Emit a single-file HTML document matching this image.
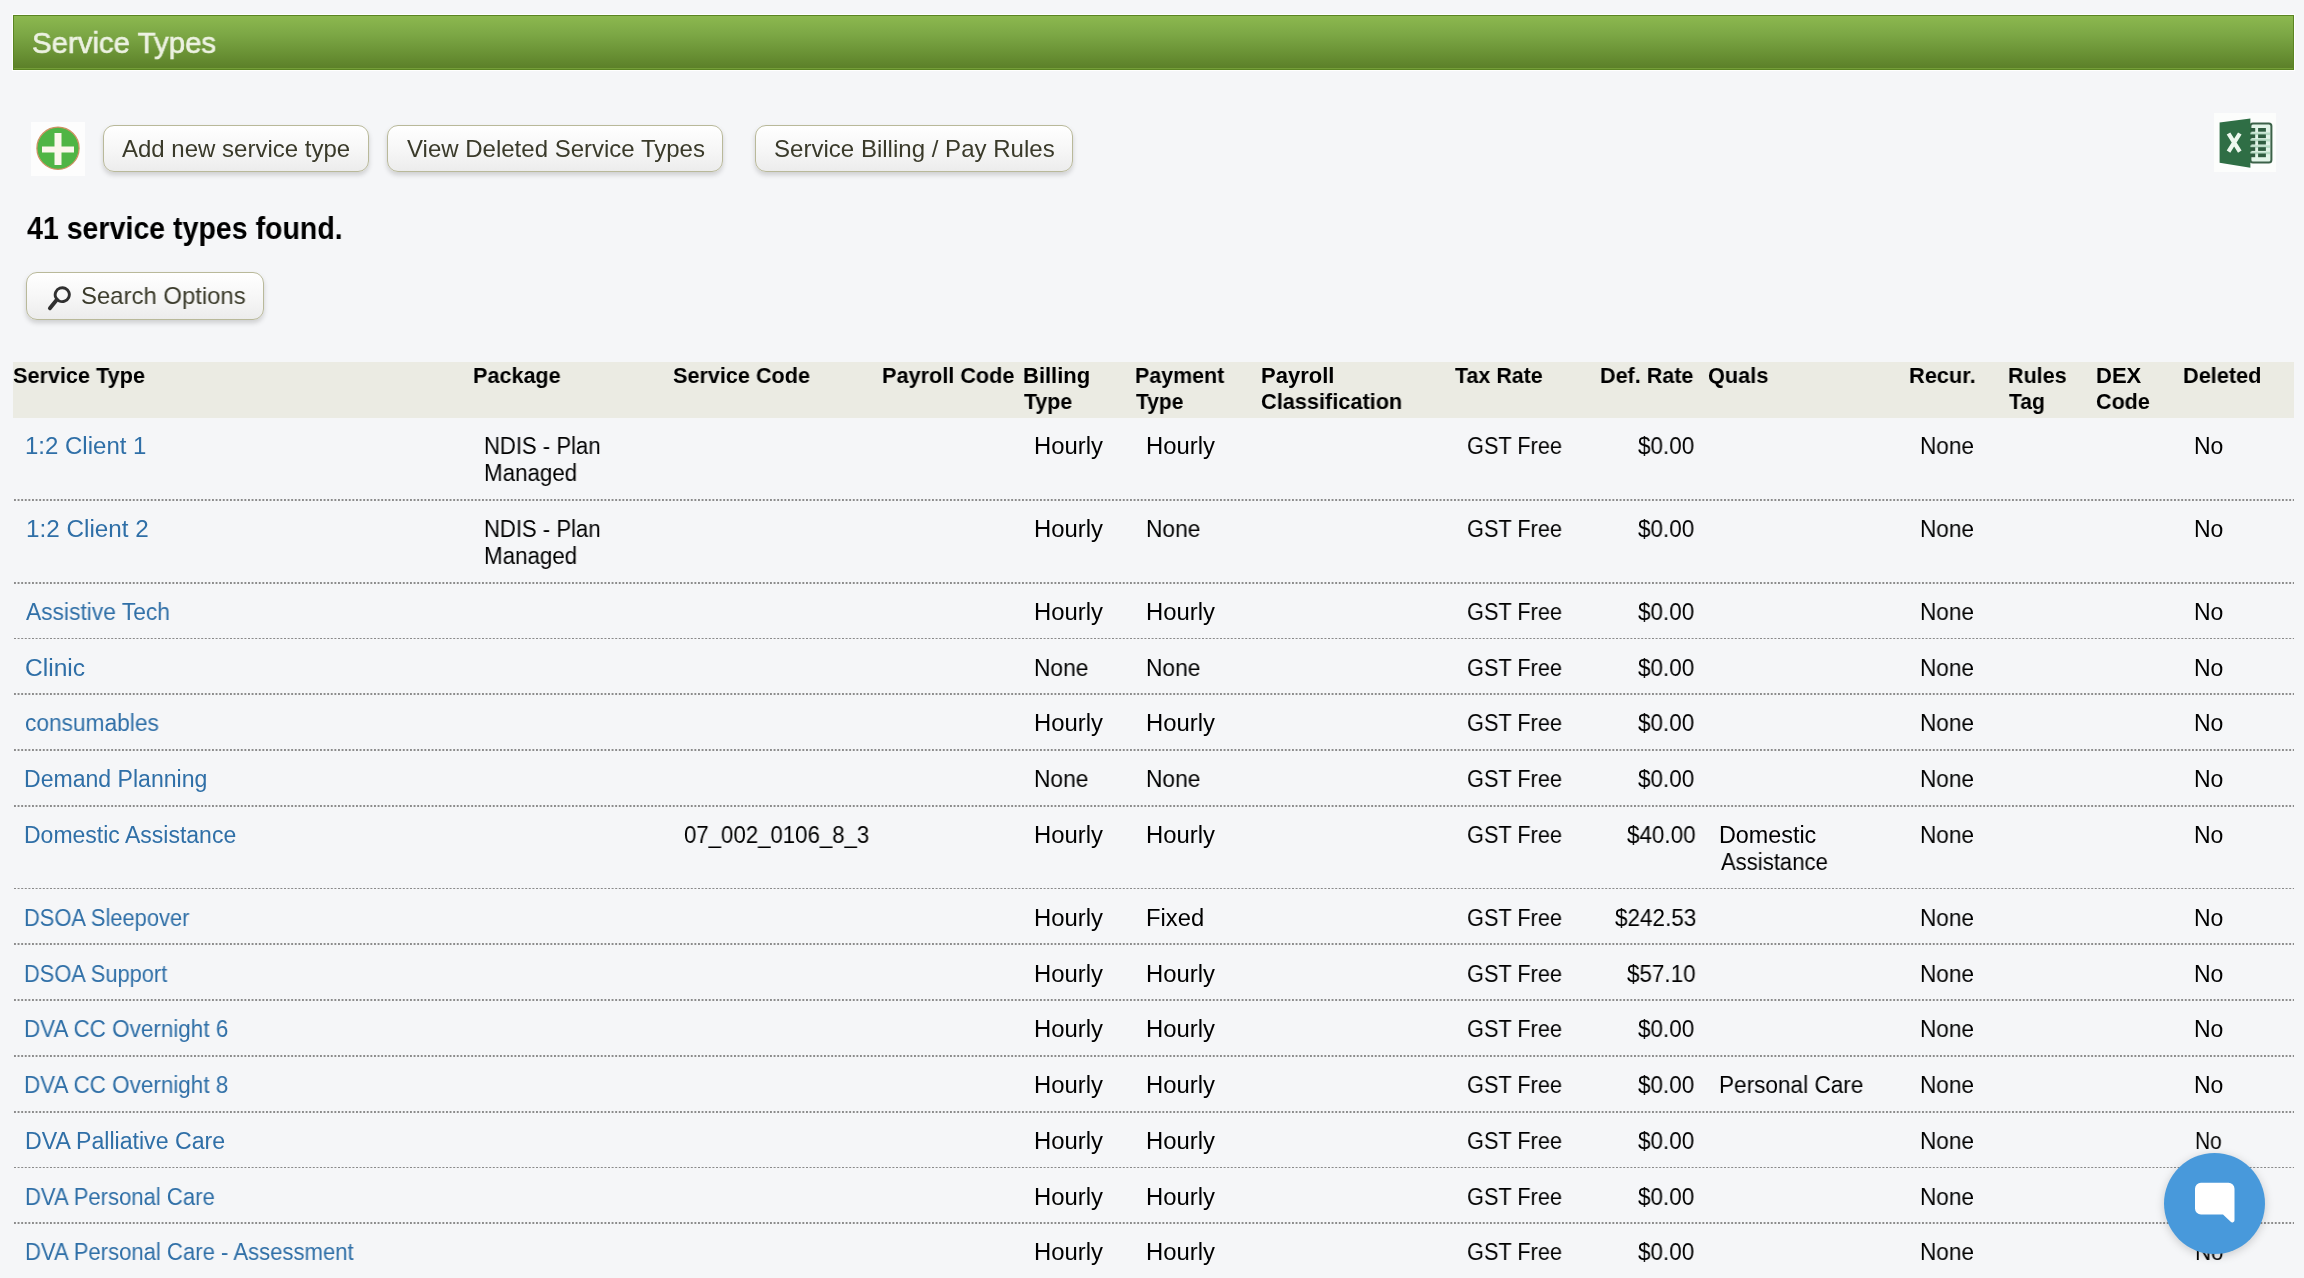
<!DOCTYPE html>
<html><head><meta charset="utf-8">
<style>
html,body{margin:0;padding:0;}
body{width:2304px;height:1278px;overflow:hidden;background:#f5f6f8;position:relative;font-family:"Liberation Sans",sans-serif;}
.t{position:absolute;white-space:nowrap;transform-origin:0 0;color:#000;will-change:transform;}
.a{color:#2f6fa7;}
.h{font-weight:bold;}
.title{color:#edf2e2;-webkit-text-stroke:0.6px #edf2e2;}
.bt{color:#3a3a2a;}
.found{font-weight:bold;}
.bar{position:absolute;left:13px;top:15px;width:2279px;height:53px;border:1px solid #5a8522;
 background:linear-gradient(#8cb84f,#7ca745 35%,#6a9235 70%,#5b7f28);box-shadow:0 0 0 1px #ffffff, inset 0 -1px 0 #749d38;}
.plus{position:absolute;left:31px;top:122px;width:54px;height:54px;background:#fdfdfd;}
.btn{position:absolute;top:125px;height:45px;border:1px solid #b9b99a;border-radius:11px;
 background:linear-gradient(#ffffff,#f6f6f6 55%,#ececec);box-shadow:0 3px 5px rgba(0,0,0,0.16);}
.thead{position:absolute;left:13px;top:362px;width:2281px;height:56px;background:#ebebe3;}
.ln{position:absolute;left:13px;}
.chat{position:absolute;left:2164px;top:1153px;width:101px;height:101px;border-radius:50%;background:#4899db;
 box-shadow:0 2px 10px rgba(0,0,0,0.18);}
</style></head><body>
<div class="bar"></div>

<div class="plus"><svg width="54" height="54" viewBox="0 0 54 54">
<circle cx="27" cy="26.2" r="21.1" fill="#4fb545" stroke="#cf9163" stroke-width="1.2"/>
<rect x="11" y="24.5" width="32" height="6" fill="#fbf7ec"/>
<rect x="23.5" y="11" width="7" height="32" fill="#fbf7ec"/>
</svg></div>

<div class="btn" style="left:103px;width:264px;"></div>
<div class="btn" style="left:387px;width:334px;"></div>
<div class="btn" style="left:755px;width:316px;"></div>

<div style="position:absolute;left:2214px;top:113px;width:62px;height:59px;background:#fcfdfc;">
<svg width="62" height="59" viewBox="0 0 62 59">
<rect x="36.4" y="10.6" width="21" height="39" rx="2.5" fill="#e2f4e8" stroke="#3b6148" stroke-width="2"/>
<g fill="#b9dcc6"><rect x="36" y="19.5" width="20" height="2.6"/><rect x="36" y="25.9" width="20" height="2.6"/><rect x="36" y="32.3" width="20" height="2.6"/><rect x="36" y="38.7" width="20" height="2.6"/></g>
<g fill="#2f5d40">
<rect x="36" y="15" width="5.2" height="3.7"/><rect x="44.1" y="15" width="7.8" height="3.7"/>
<rect x="36" y="21.4" width="5.2" height="3.7"/><rect x="44.1" y="21.4" width="7.8" height="3.7"/>
<rect x="36" y="27.8" width="5.2" height="3.7"/><rect x="44.1" y="27.8" width="7.8" height="3.7"/>
<rect x="36" y="34.2" width="5.2" height="3.7"/><rect x="44.1" y="34.2" width="7.8" height="3.7"/>
<rect x="36" y="40.5" width="5.2" height="3.7"/><rect x="44.1" y="40.5" width="7.8" height="3.7"/>
</g>
<polygon points="5.6,9.4 36.4,5.4 36.4,54.8 5.6,49.8" fill="#2f6e45"/>
<path d="M14.5,20.5 L25.8,38.6 M25.8,20.5 L14.5,38.6" stroke="#eef8ee" stroke-width="4.2" stroke-linecap="butt"/>
</svg></div>

<div class="btn" style="left:26px;top:272px;width:236px;height:46px;">
<svg style="position:absolute;left:20px;top:13px" width="26" height="26" viewBox="0 0 26 26">
<ellipse cx="15.25" cy="8.65" rx="7.1" ry="6.9" transform="rotate(-20 15.25 8.65)" fill="none" stroke="#303030" stroke-width="2.9"/>
<line x1="9.8" y1="13.8" x2="2.9" y2="22.3" stroke="#303030" stroke-width="3.9" stroke-linecap="round"/>
</svg></div>

<div class="thead"></div>
<svg class="ln" style="top:499px" width="2281" height="2"><line x1="1" y1="1" x2="2281" y2="1" stroke="#8c8c8c" stroke-width="2" stroke-dasharray="1.9 1.7"/></svg>
<svg class="ln" style="top:582px" width="2281" height="2"><line x1="1" y1="1" x2="2281" y2="1" stroke="#8c8c8c" stroke-width="2" stroke-dasharray="1.9 1.7"/></svg>
<svg class="ln" style="top:638px" width="2281" height="1"><line x1="1" y1="0.5" x2="2281" y2="0.5" stroke="#8a8a8a" stroke-width="1" stroke-dasharray="2 1.6"/></svg>
<svg class="ln" style="top:693px" width="2281" height="2"><line x1="1" y1="1" x2="2281" y2="1" stroke="#8c8c8c" stroke-width="2" stroke-dasharray="1.9 1.7"/></svg>
<svg class="ln" style="top:749px" width="2281" height="2"><line x1="1" y1="1" x2="2281" y2="1" stroke="#8c8c8c" stroke-width="2" stroke-dasharray="1.9 1.7"/></svg>
<svg class="ln" style="top:805px" width="2281" height="2"><line x1="1" y1="1" x2="2281" y2="1" stroke="#8c8c8c" stroke-width="2" stroke-dasharray="1.9 1.7"/></svg>
<svg class="ln" style="top:888px" width="2281" height="1"><line x1="1" y1="0.5" x2="2281" y2="0.5" stroke="#8a8a8a" stroke-width="1" stroke-dasharray="2 1.6"/></svg>
<svg class="ln" style="top:943px" width="2281" height="2"><line x1="1" y1="1" x2="2281" y2="1" stroke="#8c8c8c" stroke-width="2" stroke-dasharray="1.9 1.7"/></svg>
<svg class="ln" style="top:999px" width="2281" height="2"><line x1="1" y1="1" x2="2281" y2="1" stroke="#8c8c8c" stroke-width="2" stroke-dasharray="1.9 1.7"/></svg>
<svg class="ln" style="top:1055px" width="2281" height="2"><line x1="1" y1="1" x2="2281" y2="1" stroke="#8c8c8c" stroke-width="2" stroke-dasharray="1.9 1.7"/></svg>
<svg class="ln" style="top:1111px" width="2281" height="2"><line x1="1" y1="1" x2="2281" y2="1" stroke="#8c8c8c" stroke-width="2" stroke-dasharray="1.9 1.7"/></svg>
<svg class="ln" style="top:1167px" width="2281" height="1"><line x1="1" y1="0.5" x2="2281" y2="0.5" stroke="#8a8a8a" stroke-width="1" stroke-dasharray="2 1.6"/></svg>
<svg class="ln" style="top:1222px" width="2281" height="2"><line x1="1" y1="1" x2="2281" y2="1" stroke="#8c8c8c" stroke-width="2" stroke-dasharray="1.9 1.7"/></svg>
<div class="t a" id="t0" style="left:24.98px;top:432.03px;font-size:23px;line-height:28px;transform:scaleX(1.0436);">1:2 Client 1</div>
<div class="t d" id="t1" style="left:1033.93px;top:432.03px;font-size:23px;line-height:28px;transform:scaleX(1.0369);">Hourly</div>
<div class="t d" id="t2" style="left:1145.62px;top:432.03px;font-size:23px;line-height:28px;transform:scaleX(1.0369);">Hourly</div>
<div class="t d" id="t3" style="left:1466.59px;top:432.03px;font-size:23px;line-height:28px;transform:scaleX(0.9449);">GST Free</div>
<div class="t d" id="t4" style="left:1638.46px;top:432.03px;font-size:23px;line-height:28px;transform:scaleX(0.9770);">$0.00</div>
<div class="t d" id="t5" style="left:1920.27px;top:432.03px;font-size:23px;line-height:28px;transform:scaleX(0.9808);">None</div>
<div class="t d" id="t6" style="left:2194.40px;top:432.03px;font-size:23px;line-height:28px;transform:scaleX(0.9861);">No</div>
<div class="t a" id="t7" style="left:25.66px;top:515.03px;font-size:23px;line-height:28px;transform:scaleX(1.0551);">1:2 Client 2</div>
<div class="t d" id="t8" style="left:1033.93px;top:515.03px;font-size:23px;line-height:28px;transform:scaleX(1.0369);">Hourly</div>
<div class="t d" id="t9" style="left:1145.72px;top:515.03px;font-size:23px;line-height:28px;transform:scaleX(0.9881);">None</div>
<div class="t d" id="t10" style="left:1466.59px;top:515.03px;font-size:23px;line-height:28px;transform:scaleX(0.9449);">GST Free</div>
<div class="t d" id="t11" style="left:1638.46px;top:515.03px;font-size:23px;line-height:28px;transform:scaleX(0.9770);">$0.00</div>
<div class="t d" id="t12" style="left:1920.27px;top:515.03px;font-size:23px;line-height:28px;transform:scaleX(0.9808);">None</div>
<div class="t d" id="t13" style="left:2194.40px;top:515.03px;font-size:23px;line-height:28px;transform:scaleX(0.9861);">No</div>
<div class="t a" id="t14" style="left:26.23px;top:598.03px;font-size:23px;line-height:28px;transform:scaleX(0.9904);">Assistive Tech</div>
<div class="t d" id="t15" style="left:1033.93px;top:598.03px;font-size:23px;line-height:28px;transform:scaleX(1.0369);">Hourly</div>
<div class="t d" id="t16" style="left:1145.62px;top:598.03px;font-size:23px;line-height:28px;transform:scaleX(1.0369);">Hourly</div>
<div class="t d" id="t17" style="left:1466.59px;top:598.03px;font-size:23px;line-height:28px;transform:scaleX(0.9449);">GST Free</div>
<div class="t d" id="t18" style="left:1638.46px;top:598.03px;font-size:23px;line-height:28px;transform:scaleX(0.9770);">$0.00</div>
<div class="t d" id="t19" style="left:1920.27px;top:598.03px;font-size:23px;line-height:28px;transform:scaleX(0.9808);">None</div>
<div class="t d" id="t20" style="left:2194.40px;top:598.03px;font-size:23px;line-height:28px;transform:scaleX(0.9861);">No</div>
<div class="t a" id="t21" style="left:25.16px;top:654.03px;font-size:23px;line-height:28px;transform:scaleX(1.0691);">Clinic</div>
<div class="t d" id="t22" style="left:1034.02px;top:654.03px;font-size:23px;line-height:28px;transform:scaleX(0.9881);">None</div>
<div class="t d" id="t23" style="left:1145.72px;top:654.03px;font-size:23px;line-height:28px;transform:scaleX(0.9881);">None</div>
<div class="t d" id="t24" style="left:1466.59px;top:654.03px;font-size:23px;line-height:28px;transform:scaleX(0.9449);">GST Free</div>
<div class="t d" id="t25" style="left:1638.46px;top:654.03px;font-size:23px;line-height:28px;transform:scaleX(0.9770);">$0.00</div>
<div class="t d" id="t26" style="left:1920.27px;top:654.03px;font-size:23px;line-height:28px;transform:scaleX(0.9808);">None</div>
<div class="t d" id="t27" style="left:2194.40px;top:654.03px;font-size:23px;line-height:28px;transform:scaleX(0.9861);">No</div>
<div class="t a" id="t28" style="left:25.24px;top:709.03px;font-size:23px;line-height:28px;transform:scaleX(0.9880);">consumables</div>
<div class="t d" id="t29" style="left:1033.93px;top:709.03px;font-size:23px;line-height:28px;transform:scaleX(1.0369);">Hourly</div>
<div class="t d" id="t30" style="left:1145.62px;top:709.03px;font-size:23px;line-height:28px;transform:scaleX(1.0369);">Hourly</div>
<div class="t d" id="t31" style="left:1466.59px;top:709.03px;font-size:23px;line-height:28px;transform:scaleX(0.9449);">GST Free</div>
<div class="t d" id="t32" style="left:1638.46px;top:709.03px;font-size:23px;line-height:28px;transform:scaleX(0.9770);">$0.00</div>
<div class="t d" id="t33" style="left:1920.27px;top:709.03px;font-size:23px;line-height:28px;transform:scaleX(0.9808);">None</div>
<div class="t d" id="t34" style="left:2194.40px;top:709.03px;font-size:23px;line-height:28px;transform:scaleX(0.9861);">No</div>
<div class="t a" id="t35" style="left:24.22px;top:765.03px;font-size:23px;line-height:28px;transform:scaleX(1.0026);">Demand Planning</div>
<div class="t d" id="t36" style="left:1034.02px;top:765.03px;font-size:23px;line-height:28px;transform:scaleX(0.9881);">None</div>
<div class="t d" id="t37" style="left:1145.72px;top:765.03px;font-size:23px;line-height:28px;transform:scaleX(0.9881);">None</div>
<div class="t d" id="t38" style="left:1466.59px;top:765.03px;font-size:23px;line-height:28px;transform:scaleX(0.9449);">GST Free</div>
<div class="t d" id="t39" style="left:1638.46px;top:765.03px;font-size:23px;line-height:28px;transform:scaleX(0.9770);">$0.00</div>
<div class="t d" id="t40" style="left:1920.27px;top:765.03px;font-size:23px;line-height:28px;transform:scaleX(0.9808);">None</div>
<div class="t d" id="t41" style="left:2194.40px;top:765.03px;font-size:23px;line-height:28px;transform:scaleX(0.9861);">No</div>
<div class="t a" id="t42" style="left:24.23px;top:821.03px;font-size:23px;line-height:28px;">Domestic Assistance</div>
<div class="t d" id="t43" style="left:1033.93px;top:821.03px;font-size:23px;line-height:28px;transform:scaleX(1.0369);">Hourly</div>
<div class="t d" id="t44" style="left:1145.62px;top:821.03px;font-size:23px;line-height:28px;transform:scaleX(1.0369);">Hourly</div>
<div class="t d" id="t45" style="left:1466.59px;top:821.03px;font-size:23px;line-height:28px;transform:scaleX(0.9449);">GST Free</div>
<div class="t d" id="t46" style="left:1626.54px;top:821.03px;font-size:23px;line-height:28px;transform:scaleX(0.9759);">$40.00</div>
<div class="t d" id="t47" style="left:1920.27px;top:821.03px;font-size:23px;line-height:28px;transform:scaleX(0.9808);">None</div>
<div class="t d" id="t48" style="left:2194.40px;top:821.03px;font-size:23px;line-height:28px;transform:scaleX(0.9861);">No</div>
<div class="t a" id="t49" style="left:24.25px;top:904.03px;font-size:23px;line-height:28px;transform:scaleX(0.9509);">DSOA Sleepover</div>
<div class="t d" id="t50" style="left:1033.93px;top:904.03px;font-size:23px;line-height:28px;transform:scaleX(1.0369);">Hourly</div>
<div class="t d" id="t51" style="left:1145.62px;top:904.03px;font-size:23px;line-height:28px;transform:scaleX(1.0335);">Fixed</div>
<div class="t d" id="t52" style="left:1466.59px;top:904.03px;font-size:23px;line-height:28px;transform:scaleX(0.9449);">GST Free</div>
<div class="t d" id="t53" style="left:1614.62px;top:904.03px;font-size:23px;line-height:28px;transform:scaleX(0.9785);">$242.53</div>
<div class="t d" id="t54" style="left:1920.27px;top:904.03px;font-size:23px;line-height:28px;transform:scaleX(0.9808);">None</div>
<div class="t d" id="t55" style="left:2194.40px;top:904.03px;font-size:23px;line-height:28px;transform:scaleX(0.9861);">No</div>
<div class="t a" id="t56" style="left:24.25px;top:960.03px;font-size:23px;line-height:28px;transform:scaleX(0.9495);">DSOA Support</div>
<div class="t d" id="t57" style="left:1033.93px;top:960.03px;font-size:23px;line-height:28px;transform:scaleX(1.0369);">Hourly</div>
<div class="t d" id="t58" style="left:1145.62px;top:960.03px;font-size:23px;line-height:28px;transform:scaleX(1.0369);">Hourly</div>
<div class="t d" id="t59" style="left:1466.59px;top:960.03px;font-size:23px;line-height:28px;transform:scaleX(0.9449);">GST Free</div>
<div class="t d" id="t60" style="left:1626.54px;top:960.03px;font-size:23px;line-height:28px;transform:scaleX(0.9759);">$57.10</div>
<div class="t d" id="t61" style="left:1920.27px;top:960.03px;font-size:23px;line-height:28px;transform:scaleX(0.9808);">None</div>
<div class="t d" id="t62" style="left:2194.40px;top:960.03px;font-size:23px;line-height:28px;transform:scaleX(0.9861);">No</div>
<div class="t a" id="t63" style="left:24.20px;top:1015.03px;font-size:23px;line-height:28px;transform:scaleX(0.9761);">DVA CC Overnight 6</div>
<div class="t d" id="t64" style="left:1033.93px;top:1015.03px;font-size:23px;line-height:28px;transform:scaleX(1.0369);">Hourly</div>
<div class="t d" id="t65" style="left:1145.62px;top:1015.03px;font-size:23px;line-height:28px;transform:scaleX(1.0369);">Hourly</div>
<div class="t d" id="t66" style="left:1466.59px;top:1015.03px;font-size:23px;line-height:28px;transform:scaleX(0.9449);">GST Free</div>
<div class="t d" id="t67" style="left:1638.46px;top:1015.03px;font-size:23px;line-height:28px;transform:scaleX(0.9770);">$0.00</div>
<div class="t d" id="t68" style="left:1920.27px;top:1015.03px;font-size:23px;line-height:28px;transform:scaleX(0.9808);">None</div>
<div class="t d" id="t69" style="left:2194.40px;top:1015.03px;font-size:23px;line-height:28px;transform:scaleX(0.9861);">No</div>
<div class="t a" id="t70" style="left:24.20px;top:1071.03px;font-size:23px;line-height:28px;transform:scaleX(0.9761);">DVA CC Overnight 8</div>
<div class="t d" id="t71" style="left:1033.93px;top:1071.03px;font-size:23px;line-height:28px;transform:scaleX(1.0369);">Hourly</div>
<div class="t d" id="t72" style="left:1145.62px;top:1071.03px;font-size:23px;line-height:28px;transform:scaleX(1.0369);">Hourly</div>
<div class="t d" id="t73" style="left:1466.59px;top:1071.03px;font-size:23px;line-height:28px;transform:scaleX(0.9449);">GST Free</div>
<div class="t d" id="t74" style="left:1638.46px;top:1071.03px;font-size:23px;line-height:28px;transform:scaleX(0.9770);">$0.00</div>
<div class="t d" id="t75" style="left:1920.27px;top:1071.03px;font-size:23px;line-height:28px;transform:scaleX(0.9808);">None</div>
<div class="t d" id="t76" style="left:2194.40px;top:1071.03px;font-size:23px;line-height:28px;transform:scaleX(0.9861);">No</div>
<div class="t a" id="t77" style="left:24.84px;top:1127.03px;font-size:23px;line-height:28px;transform:scaleX(1.0055);">DVA Palliative Care</div>
<div class="t d" id="t78" style="left:1033.93px;top:1127.03px;font-size:23px;line-height:28px;transform:scaleX(1.0369);">Hourly</div>
<div class="t d" id="t79" style="left:1145.62px;top:1127.03px;font-size:23px;line-height:28px;transform:scaleX(1.0369);">Hourly</div>
<div class="t d" id="t80" style="left:1466.59px;top:1127.03px;font-size:23px;line-height:28px;transform:scaleX(0.9449);">GST Free</div>
<div class="t d" id="t81" style="left:1638.46px;top:1127.03px;font-size:23px;line-height:28px;transform:scaleX(0.9770);">$0.00</div>
<div class="t d" id="t82" style="left:1920.27px;top:1127.03px;font-size:23px;line-height:28px;transform:scaleX(0.9808);">None</div>
<div class="t d" id="t83" style="left:2194.58px;top:1127.03px;font-size:23px;line-height:28px;transform:scaleX(0.9112);">No</div>
<div class="t a" id="t84" style="left:24.77px;top:1183.03px;font-size:23px;line-height:28px;transform:scaleX(0.9598);">DVA Personal Care</div>
<div class="t d" id="t85" style="left:1033.93px;top:1183.03px;font-size:23px;line-height:28px;transform:scaleX(1.0369);">Hourly</div>
<div class="t d" id="t86" style="left:1145.62px;top:1183.03px;font-size:23px;line-height:28px;transform:scaleX(1.0369);">Hourly</div>
<div class="t d" id="t87" style="left:1466.59px;top:1183.03px;font-size:23px;line-height:28px;transform:scaleX(0.9449);">GST Free</div>
<div class="t d" id="t88" style="left:1638.46px;top:1183.03px;font-size:23px;line-height:28px;transform:scaleX(0.9770);">$0.00</div>
<div class="t d" id="t89" style="left:1920.27px;top:1183.03px;font-size:23px;line-height:28px;transform:scaleX(0.9808);">None</div>
<div class="t d" id="t90" style="left:2194.86px;top:1183.03px;font-size:23px;line-height:28px;transform:scaleX(0.9704);">No</div>
<div class="t a" id="t91" style="left:24.77px;top:1238.03px;font-size:23px;line-height:28px;transform:scaleX(0.9604);">DVA Personal Care - Assessment</div>
<div class="t d" id="t92" style="left:1033.93px;top:1238.03px;font-size:23px;line-height:28px;transform:scaleX(1.0369);">Hourly</div>
<div class="t d" id="t93" style="left:1145.62px;top:1238.03px;font-size:23px;line-height:28px;transform:scaleX(1.0369);">Hourly</div>
<div class="t d" id="t94" style="left:1466.59px;top:1238.03px;font-size:23px;line-height:28px;transform:scaleX(0.9449);">GST Free</div>
<div class="t d" id="t95" style="left:1638.46px;top:1238.03px;font-size:23px;line-height:28px;transform:scaleX(0.9770);">$0.00</div>
<div class="t d" id="t96" style="left:1920.27px;top:1238.03px;font-size:23px;line-height:28px;transform:scaleX(0.9808);">None</div>
<div class="t d" id="t97" style="left:2194.86px;top:1238.03px;font-size:23px;line-height:28px;transform:scaleX(0.9704);">No</div>
<div class="t d" id="t98" style="left:484.39px;top:432.03px;font-size:23px;line-height:28px;transform:scaleX(0.9596);">NDIS - Plan</div>
<div class="t d" id="t99" style="left:484.06px;top:459.03px;font-size:23px;line-height:28px;transform:scaleX(0.9720);">Managed</div>
<div class="t d" id="t100" style="left:484.39px;top:515.03px;font-size:23px;line-height:28px;transform:scaleX(0.9596);">NDIS - Plan</div>
<div class="t d" id="t101" style="left:484.06px;top:542.03px;font-size:23px;line-height:28px;transform:scaleX(0.9720);">Managed</div>
<div class="t d" id="t102" style="left:684.19px;top:821.03px;font-size:23px;line-height:28px;transform:scaleX(0.9656);">07_002_0106_8_3</div>
<div class="t d" id="t103" style="left:1718.97px;top:821.03px;font-size:23px;line-height:28px;transform:scaleX(1.0149);">Domestic</div>
<div class="t d" id="t104" style="left:1721.00px;top:848.03px;font-size:23px;line-height:28px;transform:scaleX(0.9601);">Assistance</div>
<div class="t d" id="t105" style="left:1719.04px;top:1071.03px;font-size:23px;line-height:28px;transform:scaleX(0.9818);">Personal Care</div>
<div class="t h" id="t106" style="left:12.94px;top:362.78px;font-size:22px;line-height:26px;transform:scaleX(0.9833);">Service Type</div>
<div class="t h" id="t107" style="left:472.71px;top:362.78px;font-size:22px;line-height:26px;transform:scaleX(0.9818);">Package</div>
<div class="t h" id="t108" style="left:672.71px;top:362.78px;font-size:22px;line-height:26px;transform:scaleX(0.9822);">Service Code</div>
<div class="t h" id="t109" style="left:881.94px;top:362.78px;font-size:22px;line-height:26px;transform:scaleX(0.9850);">Payroll Code</div>
<div class="t h" id="t110" style="left:1022.55px;top:362.78px;font-size:22px;line-height:26px;transform:scaleX(0.9978);">Billing</div>
<div class="t h" id="t111" style="left:1023.53px;top:389.48px;font-size:22px;line-height:26px;transform:scaleX(0.9687);">Type</div>
<div class="t h" id="t112" style="left:1134.57px;top:362.78px;font-size:22px;line-height:26px;transform:scaleX(0.9721);">Payment</div>
<div class="t h" id="t113" style="left:1135.54px;top:389.48px;font-size:22px;line-height:26px;transform:scaleX(0.9529);">Type</div>
<div class="t h" id="t114" style="left:1261.46px;top:362.78px;font-size:22px;line-height:26px;transform:scaleX(0.9956);">Payroll</div>
<div class="t h" id="t115" style="left:1261.47px;top:389.48px;font-size:22px;line-height:26px;transform:scaleX(0.9875);">Classification</div>
<div class="t h" id="t116" style="left:1455.00px;top:362.78px;font-size:22px;line-height:26px;transform:scaleX(0.9740);">Tax Rate</div>
<div class="t h" id="t117" style="left:1600.33px;top:362.78px;font-size:22px;line-height:26px;transform:scaleX(0.9805);">Def. Rate</div>
<div class="t h" id="t118" style="left:1707.55px;top:362.78px;font-size:22px;line-height:26px;transform:scaleX(0.9875);">Quals</div>
<div class="t h" id="t119" style="left:1908.63px;top:362.78px;font-size:22px;line-height:26px;transform:scaleX(0.9905);">Recur.</div>
<div class="t h" id="t120" style="left:2008.25px;top:362.78px;font-size:22px;line-height:26px;transform:scaleX(0.9774);">Rules</div>
<div class="t h" id="t121" style="left:2009.22px;top:389.48px;font-size:22px;line-height:26px;transform:scaleX(0.9575);">Tag</div>
<div class="t h" id="t122" style="left:2095.55px;top:362.78px;font-size:22px;line-height:26px;transform:scaleX(0.9968);">DEX</div>
<div class="t h" id="t123" style="left:2095.55px;top:389.48px;font-size:22px;line-height:26px;transform:scaleX(0.9783);">Code</div>
<div class="t h" id="t124" style="left:2183.16px;top:362.78px;font-size:22px;line-height:26px;transform:scaleX(0.9870);">Deleted</div>
<div class="t title" id="t125" style="left:31.71px;top:24.80px;font-size:30px;line-height:36px;transform:scaleX(0.9802);">Service Types</div>
<div class="t bt" id="t126" style="left:122.31px;top:134.38px;font-size:24px;line-height:29px;">Add new service type</div>
<div class="t bt" id="t127" style="left:406.54px;top:134.38px;font-size:24px;line-height:29px;">View Deleted Service Types</div>
<div class="t bt" id="t128" style="left:774.31px;top:134.38px;font-size:24px;line-height:29px;transform:scaleX(1.0022);">Service Billing / Pay Rules</div>
<div class="t found" id="t129" style="left:27.00px;top:209.53px;font-size:30.5px;line-height:37px;transform:scaleX(0.9359);">41 service types found.</div>
<div class="t bt" id="t130" style="left:80.55px;top:281.18px;font-size:24px;line-height:29px;transform:scaleX(0.9953);">Search Options</div>

<div class="chat"><svg style="position:absolute;left:0;top:0" width="101" height="101" viewBox="0 0 101 101">
<path d="M37,29.7 h27.5 a6,6 0 0 1 6,6 v31.5 a2.2,2.2 0 0 1 -3.8,1.5 l-7.7,-7.3 h-22 a6,6 0 0 1 -6,-6 v-19.7 a6,6 0 0 1 6,-6 z" fill="#ffffff"/>
</svg></div>
</body></html>
